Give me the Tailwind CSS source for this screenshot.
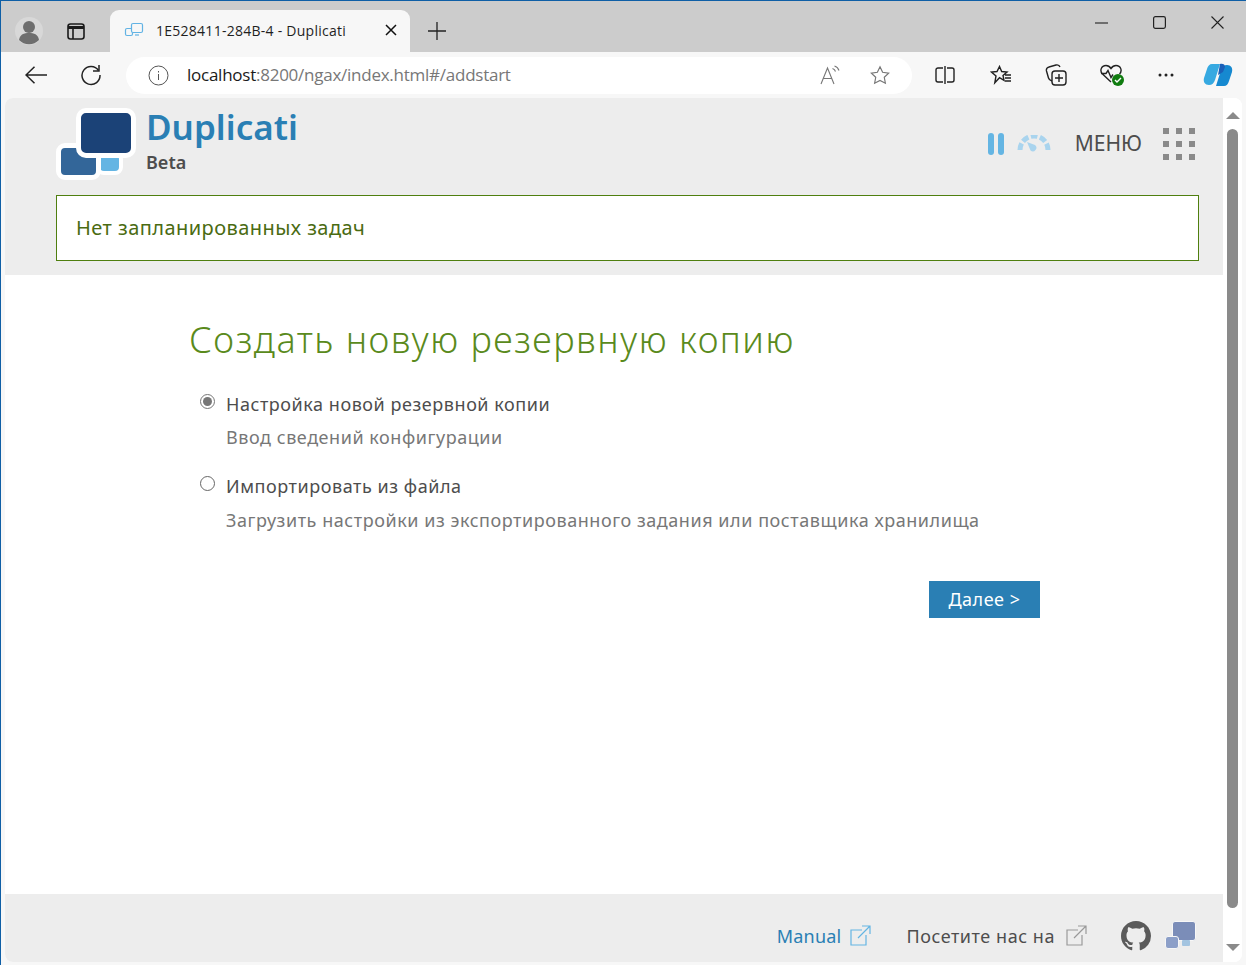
<!DOCTYPE html>
<html lang="ru">
<head>
    <meta charset="UTF-8">
    <title>1E528411-284B-4 - Duplicati</title>
    <script src="https://cdn.jsdelivr.net/npm/@tailwindcss/browser@4"></script>
</head>
<body class="w-[1246px] h-[965px] overflow-hidden bg-[#f7f7f7] font-['Noto_Sans',sans-serif]">
<div class="flex flex-col h-[965px] border-t border-t-[#0f5fa6] border-l border-l-[#0f5fa6]">

    <!-- tab strip -->
    <div class="flex items-end h-[51px] bg-[#cccccc] shrink-0 pl-[14px]">
        <div class="flex items-center h-[41px] gap-[22px] w-[95px] self-end pb-[2px]">
            <svg width="28" height="28" viewBox="0 0 28 28"><circle cx="14" cy="14" r="14" fill="#d8d8d8"/><circle cx="14" cy="10" r="6" fill="#6e6e6e"/><path d="M4 23c1-6 5-7 10-7s9 1 10 7a14 14 0 0 1-20 0z" fill="#6e6e6e"/></svg>
            <svg class="ml-[1px]" width="20" height="20" viewBox="0 0 20 20" fill="none" stroke="#1a1a1a" stroke-width="1.6"><rect x="2" y="3" width="16" height="15" rx="2.5"/><path d="M2 6.5h16" stroke-width="3"/><path d="M7 7v11"/></svg>
        </div>
        <div class="flex items-center w-[300px] h-[42px] bg-[#f7f7f7] rounded-t-[9px] pl-[14px] pb-[2px]">
            <svg width="20" height="16" viewBox="0 0 20 16" fill="none" stroke="#62b3e4" stroke-width="1.2"><rect x="7.5" y="1.5" width="11" height="9" rx="1.5"/><path d="M7 6.5H3a1.5 1.5 0 0 0-1.500 1.500v4A1.500 1.500 0 0 0 3 13.500h4a1.500 1.500 0 0 0 1.500-1.500v-1.500"/><path d="M11 13h4"/></svg>
            <span class="ml-[12px] text-[14px] tracking-[0.26px] text-[#1f1f1f] whitespace-nowrap font-['Open_Sans',sans-serif]">1E528411-284B-4 - Duplicati</span>
            <svg class="ml-auto mr-[13px]" width="12" height="12" viewBox="0 0 12 12" stroke="#111" stroke-width="1.500"><path d="M1 1l10 10M11 1L1 11"/></svg>
        </div>
        <svg class="ml-[18px] mb-[12px]" width="18" height="18" viewBox="0 0 18 18" stroke="#222" stroke-width="1.300"><path d="M9 0v18M0 9h18"/></svg>
        <div class="ml-auto flex self-start items-center h-[43px] gap-[45px] pr-[22px]">
            <svg width="13" height="14" viewBox="0 0 13 14" stroke="#222" stroke-width="1.100"><path d="M0 7h13"/></svg>
            <svg width="13" height="13" viewBox="0 0 13 13" fill="none" stroke="#222" stroke-width="1.200"><rect x=".6" y=".6" width="11.800" height="11.800" rx="1.800"/></svg>
            <svg width="13" height="13" viewBox="0 0 13 13" stroke="#222" stroke-width="1.100"><path d="M.5.500l12 12M12.500.500l-12 12"/></svg>
        </div>
    </div>

    <!-- toolbar -->
    <div class="flex items-center h-[46px] shrink-0 bg-[#f7f7f7]">
        <svg class="ml-[24px]" width="22" height="18" viewBox="0 0 22 18" fill="none" stroke="#222" stroke-width="1.500"><path d="M22 9H1M9.500.700L1 9l8.500 8.300"/></svg>
        <svg class="ml-[33px]" width="22" height="22" viewBox="0 0 22 22" fill="none" stroke="#222" stroke-width="1.500"><path d="M18.500 6.500A9 9 0 1 0 20 11"/><path d="M19 1v6h-6"/></svg>
        <div class="flex items-center ml-[24px] w-[786px] h-[37px] bg-white rounded-full">
            <svg class="ml-[22px]" width="21" height="21" viewBox="0 0 21 21" fill="none" stroke="#555" stroke-width="1"><circle cx="10.500" cy="10.500" r="9.500"/><path d="M10.500 9v6M10.500 6v1.500"/></svg>
            <span class="ml-[18px] text-[17px] tracking-[-0.25px] text-[#777] whitespace-nowrap font-['Open_Sans',sans-serif]"><span class="text-[#1a1a1a]">localhost</span>:8200/ngax/index.html#/addstart</span>
            <span class="ml-auto mr-[22px] flex items-center gap-[30px]">
                <svg width="20" height="20" viewBox="0 0 20 20" fill="none" stroke="#777" stroke-width="1.100"><path d="M1 19L7.500 3 14 19M3.200 13.500h8.600"/><path d="M12.500 3.500c1.500.5 2.500 1.500 3 3M14.500 1c2.200.7 3.800 2.300 4.500 4.500"/></svg>
                <svg width="20" height="20" viewBox="0 0 22 21" fill="none" stroke="#777" stroke-width="1.300"><path d="M11 1.500l2.900 6 6.600.9-4.800 4.600 1.200 6.500L11 16.400l-5.900 3.100 1.200-6.500L1.500 8.400l6.600-.9z"/></svg>
            </span>
        </div>
        <svg class="ml-[23px]" width="20" height="18" viewBox="0 0 20 18" fill="none" stroke="#222" stroke-width="1.400"><path d="M8 2H3a2 2 0 0 0-2 2v10a2 2 0 0 0 2 2h5M12 2h5a2 2 0 0 1 2 2v10a2 2 0 0 1-2 2h-5M10 0v18"/></svg>
        <svg class="ml-[35px]" width="22" height="20" viewBox="0 0 22 20" fill="none" stroke="#222" stroke-width="1.400"><path d="M9.500 1.500l2.200 5 5.300.5-4 3.400 1 5-4.500-2.700-4.700 5 1.200-6.800L1.500 7l5.500-.5zM15 10h6M15 13h6M15 16h6"/></svg>
        <svg class="ml-[33px]" width="22" height="22" viewBox="0 0 22 22" fill="none" stroke="#222" stroke-width="1.400"><path d="M7 17c-1.500-.5-3-1-3.500-3L1.500 7C1 5 2 3.500 4 3l7-2c2-.4 3.500.5 4 2"/><rect x="7" y="7" width="14" height="14" rx="3"/><path d="M14 10v8M10 14h8"/></svg>
        <span class="relative ml-[33px] w-[24px] h-[22px]">
            <svg width="22" height="19" viewBox="0 0 22 19" fill="none" stroke="#222" stroke-width="1.400"><path d="M11 18L2.500 10C-.5 7 1 1.500 6 1.500c2.500 0 4 1.500 5 3 1-1.500 2.500-3 5-3 5 0 6.500 5.500 3.500 8.500M1 9.500h5l2-3 3 7 2-3"/></svg>
            <span class="absolute left-[12px] top-[10px] flex items-center justify-center w-[12px] h-[12px] rounded-full bg-[#107c10]">
                <svg width="8" height="8" viewBox="0 0 8 8" fill="none" stroke="#fff" stroke-width="1.400"><path d="M1 4l2 2 4-4"/></svg>
            </span>
        </span>
        <svg class="ml-[34px]" width="16" height="4" viewBox="0 0 16 4" fill="#222"><circle cx="2" cy="2" r="1.500"/><circle cx="8" cy="2" r="1.500"/><circle cx="14" cy="2" r="1.500"/></svg>
        <svg class="ml-[29px]" width="30" height="28" viewBox="0 0 30 28"><path d="M9 3h8l-5 16c-1 3-3 5-6 5-4 0-6-3-5-7l3-9c.8-3 2.500-5 5-5z" fill="#36a9e1"/><path d="M21 25h-8l5-16c1-3 3-5 6-5 4 0 6 3 5 7l-3 9c-.8 3-2.500 5-5 5z" fill="#1689d0"/><path d="M17 3c3-.6 5 .6 5 3l-2 5-5 3z" fill="#1b5fb8"/></svg>
    </div>

    <!-- viewport -->
    <div class="flex flex-1 min-h-0 pl-[4px] pr-[4px] pb-[3px]">
        <div class="flex flex-1 min-w-0 overflow-hidden rounded-t-[8px] rounded-b-[8px] bg-white">

            <div class="flex flex-col flex-1 min-w-0">
                <!-- header -->
                <header class="bg-[#ededed] h-[177px] pl-[51px] pr-[24px] shrink-0">
                    <div class="flex h-[97px]">
                        <div class="relative w-[90px] h-[97px] shrink-0">
                            <div class="absolute left-[40px] top-[53px] w-[19px] h-[16px] bg-[#64b5e3] rounded-[8px] border-[4px] border-white box-content"></div>
                            <div class="absolute left-0 top-[45px] w-[35px] h-[27px] bg-[#336699] rounded-[9px] border-[5px] border-white box-content"></div>
                            <div class="absolute left-[20px] top-[10px] w-[50px] h-[40px] bg-[#1b4277] rounded-[10px] border-[5px] border-white box-content"></div>
                        </div>
                        <div class="flex flex-col">
                            <span class="mt-[6px] text-[35px] leading-[46px] font-semibold text-[#2a7fb4]">Duplicati</span>
                            <span class="text-[18px] leading-[24px] font-semibold text-[#4d4d4d]">Beta</span>
                        </div>
                        <div class="ml-auto flex items-center h-[92px]">
                            <svg width="16" height="22" viewBox="0 0 16 22" fill="#64b5e3"><rect width="6" height="22" rx="3"/><rect x="10" width="6" height="22" rx="3"/></svg>
                            <svg class="ml-[13px]" width="34" height="18" viewBox="0 0 34 18" fill="#a9d4ee"><path d="M3 15A14 14 0 0 1 31 15" fill="none" stroke="#a9d4ee" stroke-width="5" stroke-dasharray="6.800 2.500"/><path d="M10 7l8 3a3.500 3.500 0 1 1-4.500 5.500z"/></svg>
                            <span class="ml-[24px] text-[21px] text-[#4d4d4d]">МЕНЮ</span>
                            <div class="ml-[21px] mr-[4px] grid grid-cols-3 gap-x-[7px] gap-y-[7px]">
                                <i class="w-[6px] h-[6px] bg-[#8a8a8a]"></i><i class="w-[6px] h-[6px] bg-[#8a8a8a]"></i><i class="w-[6px] h-[6px] bg-[#8a8a8a]"></i>
                                <i class="w-[6px] h-[6px] bg-[#8a8a8a]"></i><i class="w-[6px] h-[6px] bg-[#8a8a8a]"></i><i class="w-[6px] h-[6px] bg-[#8a8a8a]"></i>
                                <i class="w-[6px] h-[6px] bg-[#8a8a8a]"></i><i class="w-[6px] h-[6px] bg-[#8a8a8a]"></i><i class="w-[6px] h-[6px] bg-[#8a8a8a]"></i>
                            </div>
                        </div>
                    </div>
                    <div class="flex items-center h-[66px] bg-white border border-[#4f7f0f] pl-[19px] text-[20px] tracking-[0.44px] text-[#4a6b12]">Нет запланированных задач</div>
                </header>

                <!-- main -->
                <main class="flex-1 bg-white pl-[184px]">
                    <h1 class="mt-[39px] text-[36px] leading-[52px] tracking-[1.5px] text-[#5a8a1c] font-light">Создать новую резервную копию</h1>
                    <div class="mt-[26px] flex items-start pl-[11px]">
                        <span class="mt-[2px] flex items-center justify-center w-[15px] h-[15px] rounded-full border border-[#777] bg-white"><span class="w-[9px] h-[9px] rounded-full bg-[#777]"></span></span>
                        <div class="ml-[11px] tracking-[0.55px]">
                            <div class="text-[18px] leading-[24px] text-[#4d4d4d]">Настройка новой резервной копии</div>
                            <div class="mt-[9px] text-[18px] leading-[24px] text-[#777]">Ввод сведений конфигурации</div>
                        </div>
                    </div>
                    <div class="mt-[25px] flex items-start pl-[11px]">
                        <span class="mt-[2px] w-[15px] h-[15px] rounded-full border border-[#666] bg-white"></span>
                        <div class="ml-[11px] tracking-[0.55px]">
                            <div class="text-[18px] leading-[24px] text-[#4d4d4d]">Импортировать из файла</div>
                            <div class="mt-[10px] text-[18px] leading-[24px] text-[#777]">Загрузить настройки из экспортированного задания или поставщика хранилища</div>
                        </div>
                    </div>
                    <div class="mt-[49px] pr-[183px] flex justify-end">
                        <button class="w-[111px] h-[37px] bg-[#2a7fb4] text-white text-[18px] tracking-[0.5px]">Далее &gt;</button>
                    </div>
                </main>

                <!-- footer -->
                <footer class="flex items-end justify-end h-[68px] shrink-0 bg-[#ededed] pb-[11px] pr-[27px] text-[18px]">
                    <span class="text-[#2a7fb4] leading-[30px] tracking-[0.2px]">Manual</span>
                    <svg class="ml-[9px] mb-[5px]" width="21" height="21" viewBox="0 0 21 21" fill="none" stroke="#64b5e3" stroke-width="1.200"><path d="M12 5H1v15h15V10M12 1h8v8M20 1L8 13"/></svg>
                    <span class="ml-[35px] text-[#4d4d4d] leading-[30px] tracking-[0.55px]">Посетите нас на</span>
                    <svg class="ml-[11px] mb-[5px]" width="21" height="21" viewBox="0 0 21 21" fill="none" stroke="#999" stroke-width="1.200"><path d="M12 5H1v15h15V10M12 1h8v8M20 1L8 13"/></svg>
                    <svg class="ml-[34px]" width="30" height="30" viewBox="0 0 16 16" fill="#5a5a5a"><path d="M8 0C3.580 0 0 3.580 0 8c0 3.540 2.290 6.530 5.470 7.590.4.070.55-.17.55-.38 0-.19-.01-.82-.01-1.490-2.010.370-2.530-.49-2.690-.940-.09-.230-.48-.940-.82-1.130-.280-.150-.680-.520-.010-.530.630-.010 1.080.580 1.230.820.720 1.210 1.870.870 2.330.660.070-.520.280-.870.510-1.070-1.780-.200-3.640-.890-3.640-3.950 0-.870.310-1.590.820-2.150-.080-.200-.360-1.020.080-2.120 0 0 .670-.210 2.200.820.640-.180 1.320-.270 2-.270s1.360.090 2 .270c1.530-1.040 2.200-.820 2.200-.820.440 1.100.160 1.920.080 2.120.510.560.820 1.270.820 2.150 0 3.070-1.870 3.750-3.650 3.950.290.250.540.730.540 1.480 0 1.070-.010 1.930-.010 2.200 0 .210.150.460.550.380A8.010 8.010 0 0 0 16 8c0-4.420-3.580-8-8-8z"/></svg>
                    <div class="relative ml-[14px] w-[31px] h-[30px]">
                        <div class="absolute left-[7px] top-0 w-[24px] h-[20px] bg-[#7b8db8] rounded-[3px] border border-[#f7f7f7]"></div>
                        <div class="absolute left-0 top-[15px] w-[14px] h-[13px] bg-[#8c9fc8] rounded-[3px] border border-[#f7f7f7]"></div>
                        <div class="absolute left-[17px] top-[19px] w-[8px] h-[6px] bg-[#a3c4e0] rounded-[1px]"></div>
                    </div>
                </footer>
            </div>

            <!-- scrollbar -->
            <div class="flex flex-col items-center w-[19px] shrink-0 bg-white">
                <span class="mt-[14px] w-0 h-0 border-x-[7px] border-x-transparent border-b-[7px] border-b-[#8a8a8a]"></span>
                <span class="mt-[10px] w-[11px] h-[779px] rounded-full bg-[#8a8a8a]"></span>
                <span class="mt-auto mb-[11px] w-0 h-0 border-x-[7px] border-x-transparent border-t-[7px] border-t-[#8a8a8a]"></span>
            </div>
        </div>
    </div>
</div>
</body>
</html>
